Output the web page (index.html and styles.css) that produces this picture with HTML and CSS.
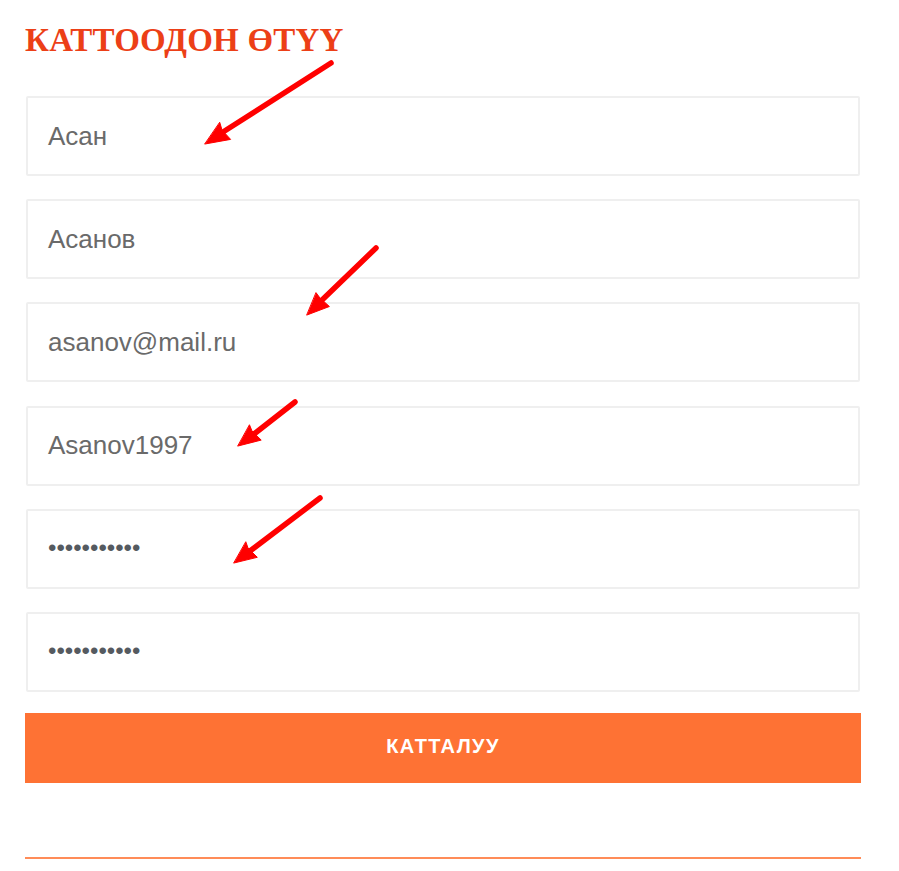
FILE: index.html
```html
<!DOCTYPE html>
<html lang="ky">
<head>
<meta charset="utf-8">
<title>Каттоодон өтүү</title>
<link rel="stylesheet" href="styles.css">
</head>
<body>
<main class="page">
  <h1 class="title">КАТТООДОН ӨТҮҮ</h1>
  <form class="form">
    <div class="field">Асан</div>
    <div class="field">Асанов</div>
    <div class="field">asanov@mail.ru</div>
    <div class="field">Asanov1997</div>
    <div class="field field-pass">•••••••••••</div>
    <div class="field field-pass">•••••••••••</div>
    <button type="button" class="submit">КАТТАЛУУ</button>
  </form>
  <hr class="rule">
  <svg class="arrows" width="899" height="871" viewBox="0 0 899 871" aria-hidden="true">
    <g stroke="#ff0000" stroke-width="5.5" stroke-linecap="round" fill="#ff0000">
      <line x1="331" y1="63" x2="223" y2="132"/>
      <polygon stroke-width="1" stroke-linejoin="round" points="205,144 230.6,139.4 222,130 219.8,122.6"/>
      <line x1="376" y1="248" x2="321" y2="301"/>
      <polygon stroke-width="1" stroke-linejoin="round" points="307,315 329.4,306.5 320,298 316.2,292.9"/>
      <line x1="295" y1="402" x2="254" y2="434"/>
      <polygon stroke-width="1" stroke-linejoin="round" points="238,446 261.2,440.1 252,431 249.6,425.1"/>
      <line x1="320" y1="498" x2="250" y2="551"/>
      <polygon stroke-width="1" stroke-linejoin="round" points="234,563 257.3,557.3 248,548 245.9,542.1"/>
    </g>
  </svg>
</main>
</body>
</html>
```

FILE: styles.css
```css
html, body {
  margin: 0;
  padding: 0;
  background: #ffffff;
}

.page {
  position: relative;
  width: 836px;
  padding: 20px 0 0 25px;
  min-height: 851px;
}

.title {
  margin: 0;
  font-family: "Liberation Serif", "Times New Roman", serif;
  font-weight: bold;
  font-size: 33px;
  line-height: 40px;
  color: #ec3f17;
  letter-spacing: 0.2px;
}

.form {
  margin: 36px 0 0;
  display: flex;
  flex-direction: column;
  gap: 23.2px;
}

.field {
  box-sizing: border-box;
  height: 80px;
  margin: 0 1px;
  padding: 0 0 0 20px;
  border: 2px solid #efefef;
  border-radius: 2px;
  background: #ffffff;
  display: flex;
  align-items: center;
  font-family: "Liberation Sans", Arial, sans-serif;
  font-size: 26px;
  color: #6a6a6a;
}

.field-pass {
  font-size: 24px;
  color: #555a60;
  padding-bottom: 2px;
}

.submit {
  box-sizing: border-box;
  height: 70px;
  margin-top: -2px;
  border: 0;
  border-radius: 0;
  background: #fe7234;
  color: #ffffff;
  font-family: "Liberation Sans", Arial, sans-serif;
  font-weight: bold;
  font-size: 20px;
  letter-spacing: 1.4px;
  padding: 0 0 4px 0;
}

.rule {
  margin: 74px 0 0;
  border: 0;
  height: 2px;
  background: #ff8c58;
}

.arrows {
  position: absolute;
  left: 0;
  top: 0;
  pointer-events: none;
}
```
